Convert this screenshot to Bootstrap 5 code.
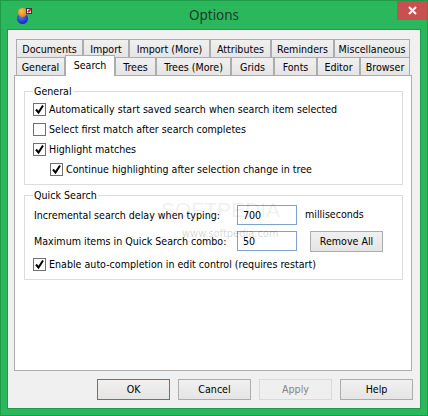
<!DOCTYPE html>
<html lang="en">
<head>
  <meta charset="UTF-8">
  <title>Options</title>
  <link href="https://cdn.jsdelivr.net/npm/bootstrap@5.3.0/dist/css/bootstrap.min.css" rel="stylesheet">
  <style>
    html, body { height: 416px; overflow: hidden; background: #2bb85c; }
    body { font: 10.6px/15px "DejaVu Sans Condensed", "Liberation Sans", sans-serif; color: #000; }
    .app-window { height: 416px; border: 1px solid #1f9a4a; padding: 0 6px 6px; }
    .title-bar { height: 28px; position: relative; }
    .title-text { font: 13.5px/29px "Noto Sans", sans-serif; color: #23382b; }
    .app-icon { position: absolute; left: 9px; top: 5px; }
    .close-x { position: absolute; right: -6px; top: 0; width: 30px; height: 19px; background: #c75050; }
    .dlg-body { background: #f0f0f0; height: 380px; border: 1px solid #1f9a4a; padding: 9px 8px 0 6px; }
    .tab-row { height: 18px; padding-left: 2px; }
    .tab-item { height: 18px; border: 1px solid #acacac; border-bottom: 0; background: linear-gradient(#f0f0f0, #e5e5e5); text-align: center; line-height: 18px; flex: none; }
    .tab-on { background: #fff; height: 21px; margin-top: -2px; position: relative; z-index: 2; line-height: 19px; }
    .tw-41 { width: 41px; } .tw-43 { width: 43px; } .tw-46 { width: 46px; } .tw-49 { width: 49px; }
    .tw-50 { width: 50px; } .tw-61 { width: 61px; } .tw-63 { width: 63px; } .tw-67 { width: 67px; }
    .tw-75 { width: 75px; } .tw-76 { width: 76px; } .tw-81 { width: 81px; }
    .tab-panel { height: 296px; background: #fff; border: 1px solid #acacac; padding: 8px 8px 0 9px; position: relative; }
    .box { border: 1px solid #dcdcdc; margin: 0; padding: 0 0 0 8px; min-width: 0; }
    .box legend { float: none; width: auto; font-size: 10.6px; line-height: 15px; margin: 0; padding: 0 1px; }
    .box-general { height: 101px; }
    .box-quick { height: 92px; margin-top: 3px; }
    .chk-row { height: 20px; }
    .chk-sub { margin-left: 17px; }
    .chk { width: 13px; height: 13px; border: 1px solid #707070; background: #fff; margin-right: 3px; flex: none; }
    .chk svg { display: block; }
    .t-input { width: 60px; height: 20px; border: 1px solid #7da2ce; padding: 0 5px; line-height: 19px; flex: none; }
    .t-label { width: 203px; margin-left: 1px; flex: none; line-height: 20px; white-space: nowrap; }
    .t-unit { margin-left: 8px; line-height: 18px; }
    .row-delay { margin-top: 2px; }
    .row-max { margin-top: 6px; }
    .row-enable { margin-top: 2px; }
    .dlg-btn { width: 73px; height: 21px; border: 1px solid #acacac; background: linear-gradient(#f0f0f0, #e5e5e5); font: inherit; padding: 0; border-radius: 0; color: #000; flex: none; }
    .dlg-btn.is-default { border-color: #3c7fb1; }
    .dlg-btn.is-off { border-color: #d9d9d9; background: #efefef; color: #838383; }
    .btn-clear { margin-left: 13px; }
    .btn-line { margin-top: 8px; margin-right: -1px; gap: 8px; }
    .mark-big { position: absolute; left: 146px; top: 123px; font: 21px/22px "Liberation Sans", sans-serif; letter-spacing: 0; color: rgba(0,0,0,.07); }
    .mark-url { position: absolute; left: 167px; top: 150px; font-size: 11px; color: rgba(0,0,0,.18); }
  </style>
</head>
<body>
  <div class="app-window d-flex flex-column">
    <div class="title-bar text-center">
      <svg class="app-icon" width="17" height="19" viewBox="0 0 17 19">
        <defs>
          <radialGradient id="ballOrange" cx=".4" cy=".35" r=".7"><stop offset="0" stop-color="#ffc050"/><stop offset="1" stop-color="#e87a10"/></radialGradient>
          <radialGradient id="ballBlue" cx=".4" cy=".35" r=".7"><stop offset="0" stop-color="#4a7cff"/><stop offset="1" stop-color="#0f20c8"/></radialGradient>
        </defs>
        <circle cx="6.5" cy="12.5" r="5.5" fill="url(#ballBlue)"/>
        <circle cx="6.5" cy="6.5" r="4.5" fill="url(#ballOrange)"/>
        <rect x="10.5" y="2.5" width="5" height="5" fill="#e8e8f0" stroke="#30305a"/>
        <path d="M12 6l3-3" stroke="#e02020" stroke-width="2"/>
      </svg>
      <span class="title-text">Options</span>
      <div class="close-x d-flex align-items-center justify-content-center">
        <svg width="9" height="9" viewBox="0 0 9 9"><path d="M1 1l7 7M8 1l-7 7" stroke="#fff" stroke-width="2"/></svg>
      </div>
    </div>
    <div class="dlg-body">
      <div class="tab-row d-flex">
        <div class="tab-item tw-67">Documents</div>
        <div class="tab-item tw-46">Import</div>
        <div class="tab-item tw-81">Import (More)</div>
        <div class="tab-item tw-61">Attributes</div>
        <div class="tab-item tw-63">Reminders</div>
        <div class="tab-item tw-76">Miscellaneous</div>
      </div>
      <div class="tab-row d-flex">
        <div class="tab-item tw-49">General</div>
        <div class="tab-item tab-on tw-50">Search</div>
        <div class="tab-item tw-41">Trees</div>
        <div class="tab-item tw-75">Trees (More)</div>
        <div class="tab-item tw-43">Grids</div>
        <div class="tab-item tw-43">Fonts</div>
        <div class="tab-item tw-43">Editor</div>
        <div class="tab-item tw-50">Browser</div>
      </div>
      <div class="tab-panel">
        <fieldset class="box box-general">
          <legend>General</legend>
          <div class="chk-row d-flex align-items-center"><span class="chk"><svg width="11" height="11" viewBox="0 0 11 11"><path d="M2 5.5l2.5 3L9 1.5" fill="none" stroke="#000" stroke-width="2"/></svg></span>Automatically start saved search when search item selected</div>
          <div class="chk-row d-flex align-items-center"><span class="chk"></span>Select first match after search completes</div>
          <div class="chk-row d-flex align-items-center"><span class="chk"><svg width="11" height="11" viewBox="0 0 11 11"><path d="M2 5.5l2.5 3L9 1.5" fill="none" stroke="#000" stroke-width="2"/></svg></span>Highlight matches</div>
          <div class="chk-row chk-sub d-flex align-items-center"><span class="chk"><svg width="11" height="11" viewBox="0 0 11 11"><path d="M2 5.5l2.5 3L9 1.5" fill="none" stroke="#000" stroke-width="2"/></svg></span>Continue highlighting after selection change in tree</div>
        </fieldset>
        <fieldset class="box box-quick">
          <legend>Quick Search</legend>
          <div class="row-delay d-flex">
            <span class="t-label">Incremental search delay when typing:</span>
            <span class="t-input">700</span>
            <span class="t-unit">milliseconds</span>
          </div>
          <div class="row-max d-flex">
            <span class="t-label">Maximum items in Quick Search combo:</span>
            <span class="t-input">50</span>
            <button class="dlg-btn btn-clear" type="button">Remove All</button>
          </div>
          <div class="chk-row row-enable d-flex align-items-center"><span class="chk"><svg width="11" height="11" viewBox="0 0 11 11"><path d="M2 5.5l2.5 3L9 1.5" fill="none" stroke="#000" stroke-width="2"/></svg></span>Enable auto-completion in edit control (requires restart)</div>
        </fieldset>
        <div class="mark-big">SOFTPEDIA</div>
        <div class="mark-url">www.softpedia.com</div>
      </div>
      <div class="btn-line d-flex justify-content-end">
        <button class="dlg-btn is-default" type="button">OK</button>
        <button class="dlg-btn" type="button">Cancel</button>
        <button class="dlg-btn is-off" type="button">Apply</button>
        <button class="dlg-btn" type="button">Help</button>
      </div>
    </div>
  </div>
</body>
</html>
